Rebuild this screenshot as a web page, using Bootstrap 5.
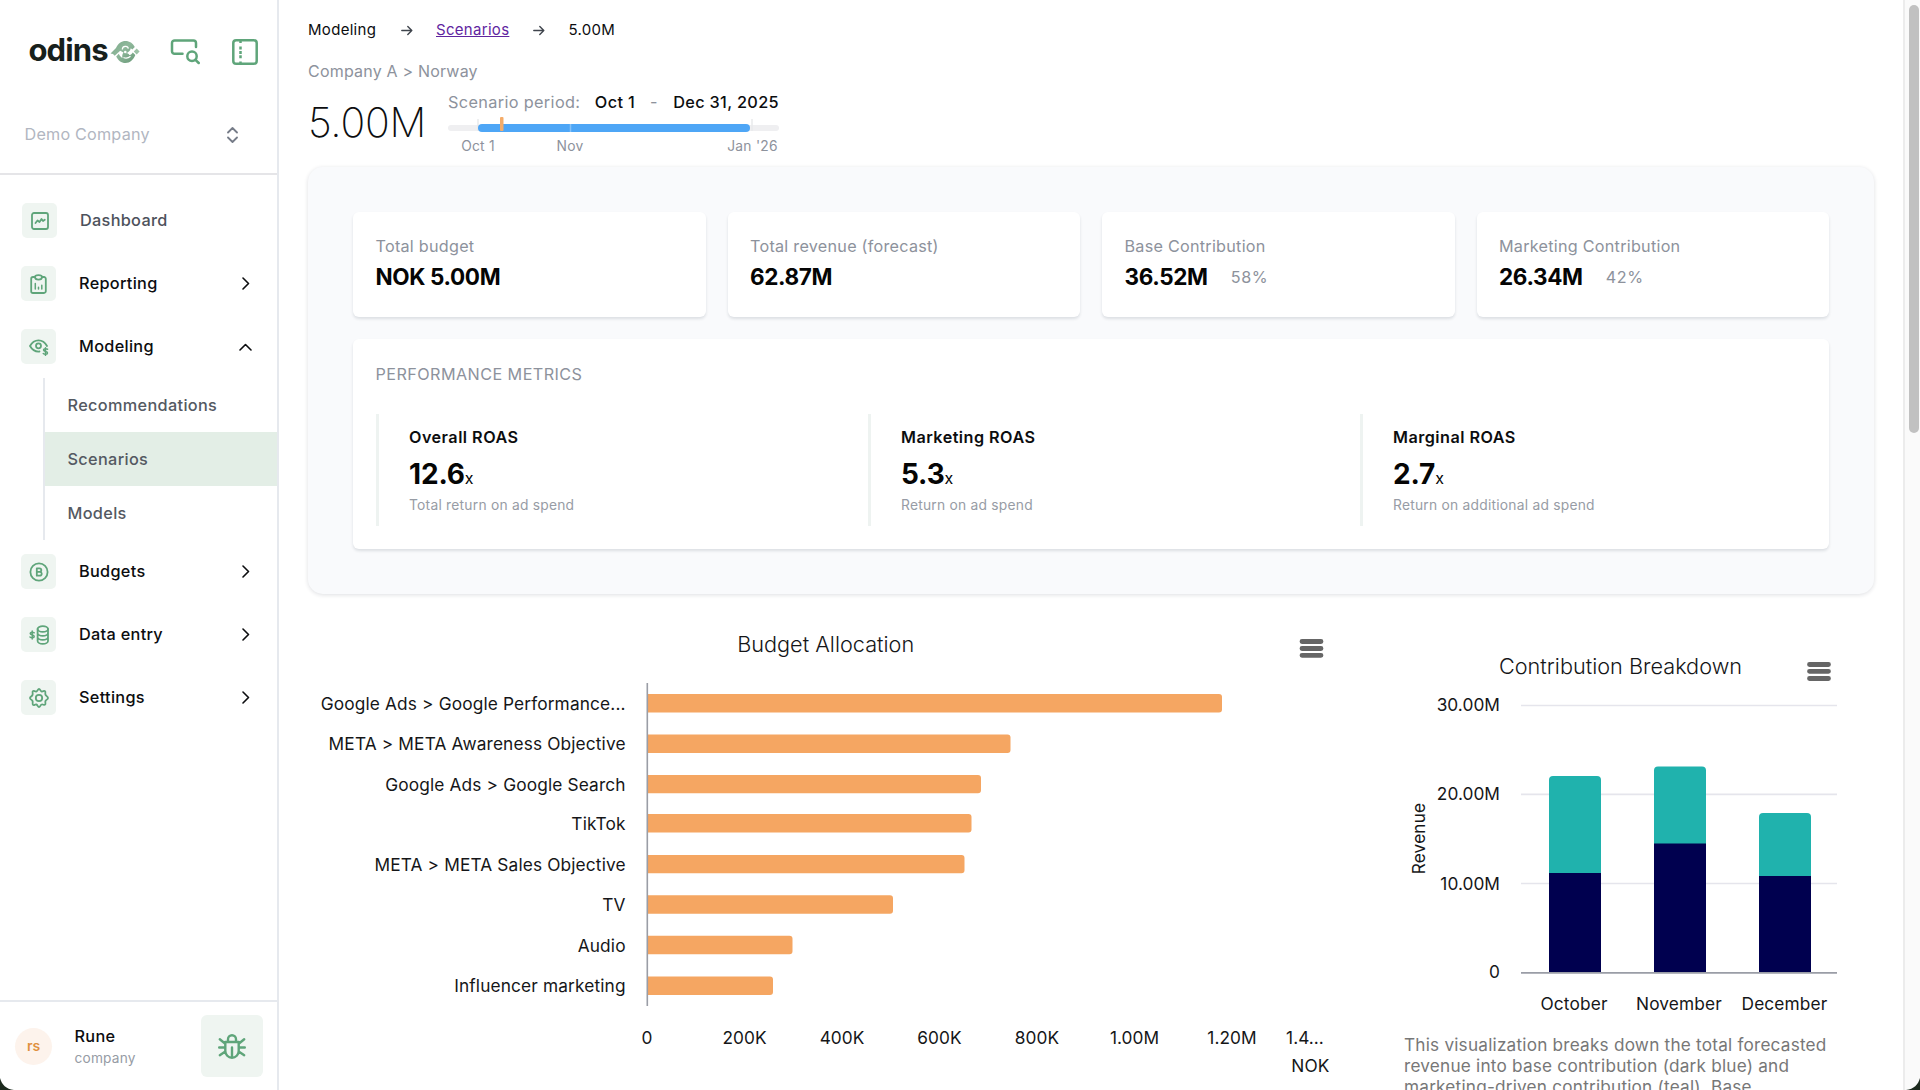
<!DOCTYPE html>
<html lang="en">
<head>
<meta charset="utf-8">
<meta name="viewport" content="width=device-width, initial-scale=1">
<title>Scenario 5.00M – odins</title>
<link href="https://cdn.jsdelivr.net/npm/bootstrap@5.3.0/dist/css/bootstrap.min.css" rel="stylesheet">
<style>
:root{--brand:#5fa57a;--tile:#eff5f1;--line:#e6e9ee;--muted:#8d929c}
body{font-family:Inter,"Liberation Sans",sans-serif;color:#0c0d0f;background:#fff;height:1090px;overflow:hidden;line-height:1.25}
svg{display:block}
.icon{fill:none;stroke:currentColor;stroke-width:1.8;stroke-linecap:round;stroke-linejoin:round}
/* sidebar */
.side{width:279px;border-right:2px solid var(--line)}
.side-top{height:104px;padding:0 19px 0 28.5px}
.wordmark{font-size:31px;font-weight:700;letter-spacing:-.9px;line-height:36px;color:#17201c;width:81px;height:40px}
.side-top .icon{color:var(--brand);stroke-width:2.5}
.company{height:71px;padding:0 39px 8px 24.5px;border-bottom:2px solid #e5e5e8;font-size:16.2px;letter-spacing:.2px;color:#b1b6c1}
.side-nav{padding-top:14px}
.nav-row{height:63px;padding:0 27.5px 0 21px;font-size:16.3px;letter-spacing:.3px;font-weight:500;color:#0c0d0f}
.nav-row.plain{color:#4d525c;padding-left:22px}
.tile{width:35px;height:35px;border-radius:5px;background:var(--tile);color:var(--brand)}
.nav-label{margin-left:23px;padding-bottom:1px}
.nav-arrow{stroke-width:1.6}
.sub-list{margin-left:43px;border-left:2px solid var(--line)}
.sub-list a{height:54px;padding:1px 0 0 22.5px;font-size:16.3px;letter-spacing:.33px;font-weight:500;color:#545962;text-decoration:none}
.sub-list a.on{background:#e3eee6}
.user{height:90px;border-top:2px solid var(--line);padding:0 14px 0 15px}
.user-text{margin-left:22.5px;padding-top:1px}
.user-name{font-size:16.3px;letter-spacing:.3px;font-weight:500}
.user-role{font-size:13.7px;letter-spacing:.2px;color:#969ba5;margin-top:3px}
.avatar{width:37px;height:37px;border-radius:50%;background:#fdf3ec;color:#e0903f;font-size:14px;font-weight:600}
.bug{width:62px;height:62px;border-radius:6px;background:var(--tile);color:var(--brand)}
/* main */
.page{padding:0 29px 0 29px}
.crumbs{height:59px;padding-top:1px;font-size:15px;letter-spacing:.3px}
.crumbs a{color:#5f259f}
.crumbs .icon{color:#3f444c;stroke-width:1.4}
.trail{height:24px;font-size:16px;letter-spacing:.2px;color:var(--muted)}
.head{height:84px}
.title-big{font-size:41px;font-weight:200;letter-spacing:-.25px;line-height:50px;padding-top:14px;width:140px}
.period{font-size:16.3px;letter-spacing:.34px;line-height:22px;padding-top:8px;width:331px}
.period .muted{color:var(--muted)}
.panel{background:#f9fafc;border-radius:15px;padding:45px;height:427px;box-shadow:0 1px 4px rgba(20,30,50,.14)}
.tile-row{gap:22px}
.box{background:#fff;border-radius:6px;box-shadow:0 2px 3px rgba(20,30,50,.12)}
.stat{height:105px;padding:21px 22.5px 0}
.stat-name{font-size:16.2px;letter-spacing:.25px;line-height:26px;color:var(--muted)}
.stat-num{font-size:22.5px;font-weight:700;letter-spacing:-.36px;line-height:34px;padding-top:1px;color:#050505}
.stat-pct{font-size:16.2px;letter-spacing:.6px;color:var(--muted);margin-left:23px;padding-top:2px}
.perf{height:210px;margin-top:22px;padding:22px 22.5px}
.perf-title{font-size:16.2px;letter-spacing:.43px;line-height:27px;height:26px;color:var(--muted)}
.roas-row{gap:45px;margin-top:27px}
.roas{height:112px;border-left:3px solid #eef3f1;padding:11px 0 0 30.5px}
.roas-name{font-size:16.2px;letter-spacing:.47px;font-weight:600;line-height:24px}
.roas-num{font-size:28px;font-weight:700;letter-spacing:-.15px;line-height:48px;padding-top:1px;color:#050505}
.roas-num small{font-size:16px;font-weight:400;letter-spacing:0}
.roas-note{font-size:13.8px;letter-spacing:.24px;line-height:16px;color:#979ca5;margin-top:-5px}
.note{width:440px;font-size:17.2px;letter-spacing:.21px;line-height:21px;color:#777}
.chart text{font-size:17.3px;letter-spacing:.14px;fill:#151618}
.chart .chart-title{font-size:21.65px;font-weight:300;letter-spacing:.02px}
.chart .axis text{letter-spacing:.04px}
.sbar{width:17px;background:#fafafa;border-left:2px solid #ececec;padding:5px 1px 0 4px}
.thumb{height:428px;border-radius:6px;background:#c1c1c1}
.corner{position:absolute;bottom:0;width:14px;height:12px}
</style>
</head>
<body class="d-flex position-relative">
<aside class="side d-flex flex-column flex-shrink-0">
  <div class="side-top d-flex align-items-center flex-shrink-0">
    <div class="wordmark">odins</div>
    <svg width="30" height="24" viewBox="0 0 30 24">
      <defs><linearGradient id="g" x1="0" y1="0" x2="1" y2="1"><stop offset="0" stop-color="#7ba98a"/><stop offset=".45" stop-color="#8fb89b"/><stop offset="1" stop-color="#6a9a79"/></linearGradient></defs>
      <path fill="url(#g)" d="M.5 13.500 6 8C8 3.500 11.500 1 15.500 1c4 0 7.500 2.300 9.300 6l-2.500 2.500-1.500-1.300c-.5 3-2.800 4.200-5.300 5.300 1.500-.5 3 0 3.700 1.300 1 .9 2.300-.5 3.600-2.300l2.500 2.500c-1.800 4.500-5.300 8-9.800 8-4.200 0-7.600-2.700-9.300-6.500l2.600-2.800c1 2 2 3.500 3.700 4.300-.6-2-.2-4 1-5.500l-3.300-1.700-5.500 5L3 14z"/>
      <path fill="none" stroke="#fff" stroke-width="1.200" d="M12.300 9.500c0-3.800 5.700-4 6-.9M13.500 17.500c2.500 1.200 5 .5 7-1.200"/>
      <circle cx="15.300" cy="12" r="1.300" fill="#fff"/>
      <path fill="#9cc2a6" d="m26.700 8.600 2.900 2.900-2.900 2.900-2.900-2.900z"/>
    </svg>
    <svg class="icon ms-auto" width="30" height="28" viewBox="0 0 30 28"><path d="M12.500 15.800H4.600A2.600 2.600 0 0 1 2 13.200V5a2.600 2.600 0 0 1 2.600-2.600h18.800A2.600 2.600 0 0 1 26 5v4"/><circle cx="22" cy="18.300" r="4.700"/><path d="m25.500 21.800 3.200 3.200"/></svg>
    <svg class="icon" width="26" height="26" viewBox="0 0 26 26" style="margin-left:32px"><rect x="1.300" y="1.300" width="23.400" height="23.400" rx="2.800"/><path d="M8.500 2v2M8.500 7.500v3M8.500 11.900v3M8.500 16.300v3M8.500 22.500v1.500" stroke-linecap="butt"/></svg>
  </div>
  <div class="company d-flex align-items-center justify-content-between flex-shrink-0">
    <span>Demo Company</span>
    <svg class="icon" width="11" height="16" viewBox="0 0 11 16" color="#767c88"><path d="M1 5.500 5.500 1 10 5.500M1 10.500 5.500 15l4.500-4.500"/></svg>
  </div>
  <nav class="side-nav flex-grow-1">
    <div class="nav-row plain d-flex align-items-center">
      <span class="tile d-flex align-items-center justify-content-center"><svg class="icon" width="18" height="18" viewBox="0 0 18 18"><rect x="1" y="1" width="16" height="16" rx="2"/><path d="m4.500 11 2-2.500L8.500 10l2-3 1.500 2 1.800-1.300"/></svg></span>
      <span class="nav-label">Dashboard</span></div>
    <div class="nav-row d-flex align-items-center">
      <span class="tile d-flex align-items-center justify-content-center"><svg class="icon" width="17" height="20" viewBox="0 0 17 20"><path d="M5 3H3a1.800 1.800 0 0 0-1.800 1.800v12.400A1.800 1.800 0 0 0 3 19h11a1.800 1.800 0 0 0 1.800-1.800V4.800A1.800 1.800 0 0 0 14 3h-2"/><path d="M5 3c0-1 .8-1.800 3.500-1.800S12 2 12 3s-1 2.600-3.500 2.600S5 4 5 3z"/><path d="M5.300 15V9.500M8.500 15v-1.800M11.800 15v-3.800" stroke-width="1.500"/></svg></span>
      <span class="nav-label">Reporting</span>
      <svg class="icon nav-arrow ms-auto" width="8" height="13" viewBox="0 0 8 13"><path d="m1 1 5.500 5.500L1 12"/></svg></div>
    <div class="nav-row d-flex align-items-center">
      <span class="tile d-flex align-items-center justify-content-center"><svg class="icon" width="20" height="18" viewBox="0 0 20 18"><path d="M10.500 13.500C6 14 3 11.500 1 8c4-7.500 13-7.500 17 0"/><circle cx="9.500" cy="7.800" r="2.500"/><path d="M18.500 11.200c-1.400-1-4-.6-4 .9 0 1.800 4 1 4 2.800 0 1.600-3 1.700-4.200.6M16.500 9.800v7.500" stroke-width="1.500"/></svg></span>
      <span class="nav-label">Modeling</span>
      <svg class="icon nav-arrow ms-auto" style="margin-right:-2.500px" width="13" height="8" viewBox="0 0 13 8"><path d="m1 7 5.500-5.500L12 7"/></svg></div>
    <div class="sub-list">
      <a href="#" class="d-flex align-items-center">Recommendations</a>
      <a href="#" class="d-flex align-items-center on">Scenarios</a>
      <a href="#" class="d-flex align-items-center">Models</a>
    </div>
    <div class="nav-row d-flex align-items-center">
      <span class="tile d-flex align-items-center justify-content-center"><svg class="icon" width="20" height="20" viewBox="0 0 20 20"><circle cx="10" cy="10" r="8.600"/><path d="M7.800 6.300h2.700a1.800 1.800 0 0 1 0 3.600H7.800zM7.800 9.900h3a1.900 1.900 0 0 1 0 3.800h-3z"/></svg></span>
      <span class="nav-label">Budgets</span>
      <svg class="icon nav-arrow ms-auto" width="8" height="13" viewBox="0 0 8 13"><path d="m1 1 5.500 5.500L1 12"/></svg></div>
    <div class="nav-row d-flex align-items-center">
      <span class="tile d-flex align-items-center justify-content-center"><svg class="icon" width="20" height="20" viewBox="0 0 20 20"><ellipse cx="13.800" cy="4" rx="5.200" ry="2.900"/><path d="M8.600 4v12c0 1.600 2.300 2.900 5.200 2.900S19 17.600 19 16V4M8.600 8c0 1.600 2.300 2.900 5.200 2.900S19 9.600 19 8M8.600 12c0 1.600 2.300 2.900 5.200 2.900S19 13.600 19 12"/><path d="M5.200 7.800c-1.400-1-4-.7-4 .8 0 1.800 4 1 4 2.800 0 1.600-3 1.600-4.200.6M3.200 6v8" stroke-width="1.500"/></svg></span>
      <span class="nav-label">Data entry</span>
      <svg class="icon nav-arrow ms-auto" width="8" height="13" viewBox="0 0 8 13"><path d="m1 1 5.500 5.500L1 12"/></svg></div>
    <div class="nav-row d-flex align-items-center">
      <span class="tile d-flex align-items-center justify-content-center"><svg class="icon" width="20" height="20" viewBox="0 0 20 20"><path d="M10 1c1.300 0 1.300 2.200 2.700 2.500s2.300-1.300 3.300-.4-.2 2.400.5 3.700S19 8.600 19 10s-1.800 1.600-2.500 3 .6 2.800-.4 3.700-2-.6-3.400-.2S11.300 19 10 19s-1.300-2.200-2.700-2.500-2.300 1.200-3.300.3.200-2.400-.5-3.800S1 11.400 1 10s1.800-1.500 2.500-3-.6-2.900.4-3.800 2 .6 3.400.3S8.700 1 10 1z"/><circle cx="10" cy="10" r="3.200"/></svg></span>
      <span class="nav-label">Settings</span>
      <svg class="icon nav-arrow ms-auto" width="8" height="13" viewBox="0 0 8 13"><path d="m1 1 5.500 5.500L1 12"/></svg></div>
  </nav>
  <div class="user d-flex align-items-center flex-shrink-0">
    <span class="avatar d-flex align-items-center justify-content-center">rs</span>
    <div class="user-text">
      <div class="user-name">Rune</div>
      <div class="user-role">company</div>
    </div>
    <span class="bug d-flex align-items-center justify-content-center ms-auto"><svg class="icon" width="28" height="25" viewBox="0 0 28 25" style="stroke-width:2.400"><path d="M7.300 8h13.400v9a6.700 6.700 0 0 1-13.400 0zM10 7.800V5.300a4 4 0 0 1 8 0v2.500M14 13.500v9.800M7 9.500 1.800 5.300M21 9.500l5.200-4.200M7 13.500H1.200M21 13.500h5.800M7.300 17.500l-5.500 3.700M20.700 17.500l5.500 3.700"/></svg></span>
  </div>
</aside>

<main class="page flex-grow-1 overflow-hidden">
  <nav class="crumbs d-flex align-items-center">
    <span style="width:93px">Modeling</span>
    <svg class="icon" width="12" height="11" viewBox="0 0 12 11"><path d="M.8 5.500h10M6.800 1.500l4 4-4 4"/></svg>
    <a href="#" style="margin-left:23px;width:97px">Scenarios</a>
    <svg class="icon" width="12" height="11" viewBox="0 0 12 11"><path d="M.8 5.500h10M6.800 1.500l4 4-4 4"/></svg>
    <span style="margin-left:23.500px">5.00M</span>
  </nav>
  <div class="trail d-flex align-items-center">Company A &gt; Norway</div>
  <div class="head d-flex">
    <div class="title-big">5.00M</div>
    <div class="period">
      <div class="d-flex"><span class="muted">Scenario period:</span><span style="font-weight:500;margin-left:14.500px">Oct 1</span><span class="muted" style="margin-left:15px">-</span><span class="ms-auto" style="font-weight:500">Dec 31, 2025</span></div>
      <svg width="331" height="42" viewBox="448 113 331 42">
        <rect x="448" y="125" width="331" height="6" rx="3" fill="#efeff1"/>
        <path d="M478 119v12M752 119v12" stroke="#e9eaec" stroke-width="1.500"/>
        <rect x="478" y="124" width="272" height="8" rx="4" fill="#4ea6f6"/>
        <path d="M570.500 124v8" stroke="#85c1f8" stroke-width="1.500"/>
        <rect x="500" y="117" width="3.500" height="14" rx="1" fill="#f5ac69"/>
        <g font-size="13.800" letter-spacing=".25" fill="#8d929c" text-anchor="middle"><text x="478" y="151">Oct 1</text><text x="570" y="151">Nov</text><text x="752.500" y="151">Jan '26</text></g>
      </svg>
    </div>
  </div>
  <section class="panel">
    <div class="tile-row d-flex">
      <div class="box stat flex-fill w-100"><div class="stat-name">Total budget</div><div class="stat-num">NOK 5.00M</div></div>
      <div class="box stat flex-fill w-100"><div class="stat-name">Total revenue (forecast)</div><div class="stat-num">62.87M</div></div>
      <div class="box stat flex-fill w-100"><div class="stat-name">Base Contribution</div><div class="d-flex align-items-center"><span class="stat-num">36.52M</span><span class="stat-pct">58%</span></div></div>
      <div class="box stat flex-fill w-100"><div class="stat-name">Marketing Contribution</div><div class="d-flex align-items-center"><span class="stat-num">26.34M</span><span class="stat-pct">42%</span></div></div>
    </div>
    <div class="box perf">
      <div class="perf-title">PERFORMANCE METRICS</div>
      <div class="roas-row d-flex">
        <div class="roas w-100"><div class="roas-name">Overall ROAS</div><div class="roas-num">12.6<small>x</small></div><div class="roas-note">Total return on ad spend</div></div>
        <div class="roas w-100"><div class="roas-name">Marketing ROAS</div><div class="roas-num">5.3<small>x</small></div><div class="roas-note">Return on ad spend</div></div>
        <div class="roas w-100"><div class="roas-name">Marginal ROAS</div><div class="roas-num">2.7<small>x</small></div><div class="roas-note">Return on additional ad spend</div></div>
      </div>
    </div>
  </section>
  <section class="d-flex">
    <svg class="chart flex-shrink-0" width="1096" height="496" viewBox="308 594 1096 496">
      <text class="chart-title" x="825.700" y="651.500" text-anchor="middle">Budget Allocation</text>
      <path d="M1302 641.500h19M1302 648.500h19M1302 655.300h19" stroke="#666" stroke-width="4.800" stroke-linecap="round"/>
      <g fill="#f5a662">
        <path d="M647 694H1219a3 3 0 0 1 3 3v12.500a3 3 0 0 1-3 3H647z"/>
        <path d="M647 734.500H1007.500a3 3 0 0 1 3 3V750a3 3 0 0 1-3 3H647z"/>
        <path d="M647 775H978a3 3 0 0 1 3 3v12.300a3 3 0 0 1-3 3H647z"/>
        <path d="M647 814H968.500a3 3 0 0 1 3 3v12.500a3 3 0 0 1-3 3H647z"/>
        <path d="M647 855H961.500a3 3 0 0 1 3 3v12.300a3 3 0 0 1-3 3H647z"/>
        <path d="M647 895.300H890a3 3 0 0 1 3 3v12.500a3 3 0 0 1-3 3H647z"/>
        <path d="M647 935.700H789.500a3 3 0 0 1 3 3v12.500a3 3 0 0 1-3 3H647z"/>
        <path d="M647 976.500H770a3 3 0 0 1 3 3V992a3 3 0 0 1-3 3H647z"/>
      </g>
      <path d="M647.300 683v323" stroke="#9a9da6" stroke-width="1.600"/>
      <g text-anchor="end">
        <text x="625.700" y="709.500">Google Ads &gt; Google Performance...</text>
        <text x="625.700" y="749.500">META &gt; META Awareness Objective</text>
        <text x="625.700" y="790.500">Google Ads &gt; Google Search</text>
        <text x="625.700" y="829.500">TikTok</text>
        <text x="625.700" y="870.500">META &gt; META Sales Objective</text>
        <text x="625.700" y="910.500">TV</text>
        <text x="625.700" y="951.500">Audio</text>
        <text x="625.700" y="991.500">Influencer marketing</text>
        <text x="1329.500" y="1072">NOK</text>
      </g>
      <g class="axis" text-anchor="middle">
        <text x="647" y="1043.500">0</text><text x="744.500" y="1043.500">200K</text><text x="842" y="1043.500">400K</text><text x="939.500" y="1043.500">600K</text><text x="1037" y="1043.500">800K</text><text x="1134.500" y="1043.500">1.00M</text><text x="1232" y="1043.500">1.20M</text><text x="1305" y="1043.500">1.4...</text>
      </g>
    </svg>
    <div class="flex-shrink-0">
      <svg class="chart" width="470" height="440" viewBox="1404 594 470 440">
        <text class="chart-title" x="1620.500" y="674" text-anchor="middle">Contribution Breakdown</text>
        <path d="M1809.500 664.500h19M1809.500 671.300h19M1809.500 678.500h19" stroke="#666" stroke-width="4.800" stroke-linecap="round"/>
        <path d="M1521 705.500h316M1521 794.300h316M1521 883.500h316" stroke="#e5e5ec" stroke-width="1.700"/>
        <g fill="#20b2ad">
          <path d="M1549 873V780a4 4 0 0 1 4-4h44a4 4 0 0 1 4 4v93z"/>
          <path d="M1654 844V770.500a4 4 0 0 1 4-4h44a4 4 0 0 1 4 4V844z"/>
          <path d="M1759 876V817a4 4 0 0 1 4-4h44a4 4 0 0 1 4 4v59z"/>
        </g>
        <path fill="#00004f" d="M1549 873h52v100h-52zM1654 843.500h52V973h-52zM1759 876h52v97h-52z"/>
        <path d="M1521 972.800h316" stroke="#9a9da6" stroke-width="1.700"/>
        <g class="axis" text-anchor="end"><text x="1500" y="711">30.00M</text><text x="1500" y="800">20.00M</text><text x="1500" y="889.500">10.00M</text><text x="1500" y="978">0</text></g>
        <g text-anchor="middle"><text x="1574" y="1009.500">October</text><text x="1679" y="1009.500">November</text><text x="1784.500" y="1009.500">December</text>
        <text transform="translate(1425 838.500) rotate(-90)">Revenue</text></g>
      </svg>
      <p class="note mb-0">This visualization breaks down the total forecasted<br>revenue into base contribution (dark blue) and<br>marketing-driven contribution (teal). Base</p>
    </div>
  </section>
</main>
<div class="sbar flex-shrink-0"><div class="thumb"></div></div>
<svg class="corner start-0" viewBox="0 0 14 12"><path d="M0 0c2 7 6 11 14 12H0z" fill="#1d2a1e"/></svg>
<svg class="corner end-0" viewBox="0 0 14 12"><path d="M14 0c-2 7-6 11-14 12h14z" fill="#1d2a1e"/></svg>
<script src="https://cdn.jsdelivr.net/npm/bootstrap@5.3.0/dist/js/bootstrap.bundle.min.js"></script>
</body>
</html>
